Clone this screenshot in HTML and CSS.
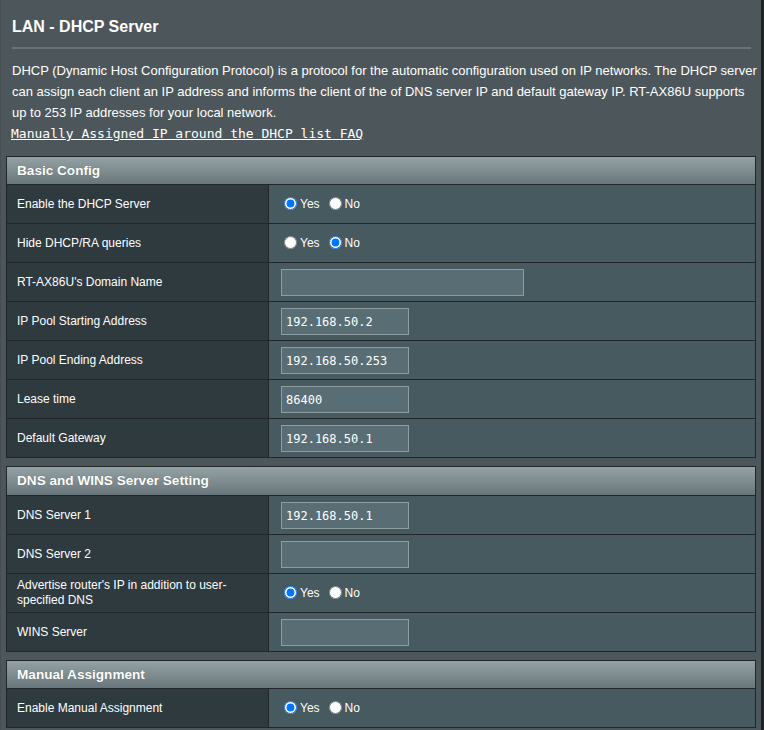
FILE: index.html
```html
<!DOCTYPE html>
<html>
<head>
<meta charset="utf-8">
<title>LAN - DHCP Server</title>
<link rel="stylesheet" href="styles.css">
</head>
<body>
<div class="page">
  <div class="head">
    <div class="title">LAN - DHCP Server</div>
    <div class="rule"></div>
    <p class="desc">DHCP (Dynamic Host Configuration Protocol) is a protocol for the automatic configuration used on IP networks. The DHCP server can assign each client an IP address and informs the client of the of DNS server IP and default gateway IP. RT-AX86U supports up to 253 IP addresses for your local network.<br><a class="faq" href="#">Manually Assigned IP around the DHCP list FAQ</a></p>
  </div>

  <div class="section">
    <div class="section-head">Basic Config</div>
    <div class="row">
      <div class="label">Enable the DHCP Server</div>
      <div class="value"><input type="radio" name="dhcp" checked><span class="opt">Yes</span> <input type="radio" name="dhcp"><span class="opt">No</span></div>
    </div>
    <div class="row">
      <div class="label">Hide DHCP/RA queries</div>
      <div class="value"><input type="radio" name="hide"><span class="opt">Yes</span> <input type="radio" name="hide" checked><span class="opt">No</span></div>
    </div>
    <div class="row">
      <div class="label">RT-AX86U's Domain Name</div>
      <div class="value"><input class="field wide" type="text" value=""></div>
    </div>
    <div class="row">
      <div class="label">IP Pool Starting Address</div>
      <div class="value"><input class="field" type="text" value="192.168.50.2"></div>
    </div>
    <div class="row">
      <div class="label">IP Pool Ending Address</div>
      <div class="value"><input class="field" type="text" value="192.168.50.253"></div>
    </div>
    <div class="row">
      <div class="label">Lease time</div>
      <div class="value"><input class="field" type="text" value="86400"></div>
    </div>
    <div class="row">
      <div class="label">Default Gateway</div>
      <div class="value"><input class="field" type="text" value="192.168.50.1"></div>
    </div>
  </div>

  <div class="section second">
    <div class="section-head">DNS and WINS Server Setting</div>
    <div class="row">
      <div class="label">DNS Server 1</div>
      <div class="value"><input class="field" type="text" value="192.168.50.1"></div>
    </div>
    <div class="row">
      <div class="label">DNS Server 2</div>
      <div class="value"><input class="field" type="text" value=""></div>
    </div>
    <div class="row">
      <div class="label two-line">Advertise router's IP in addition to user-specified DNS</div>
      <div class="value"><input type="radio" name="adv" checked><span class="opt">Yes</span> <input type="radio" name="adv"><span class="opt">No</span></div>
    </div>
    <div class="row">
      <div class="label">WINS Server</div>
      <div class="value"><input class="field" type="text" value=""></div>
    </div>
  </div>

  <div class="section third">
    <div class="section-head">Manual Assignment</div>
    <div class="row">
      <div class="label">Enable Manual Assignment</div>
      <div class="value"><input type="radio" name="man" checked><span class="opt">Yes</span> <input type="radio" name="man"><span class="opt">No</span></div>
    </div>
  </div>
</div>
</body>
</html>
```

FILE: styles.css
```css
html, body {
  margin: 0;
  padding: 0;
}

body {
  background: #1f2326;
  font-family: "Liberation Sans", Arial, sans-serif;
  color: #ffffff;
  overflow: hidden;
}

.page {
  width: 760px;
  height: 730px;
  background: #4d575b;
  border-left: 1px solid #454e51;
  overflow: hidden;
}

.head {
  padding: 17px 2px 0 11px;
}

.title {
  font-size: 16px;
  font-weight: bold;
  line-height: 20px;
  height: 20px;
}

.rule {
  margin: 10px 8px 0 0;
  height: 2px;
  background: #65737a;
}

.desc {
  margin: 11px 0 0 0;
  font-size: 13px;
  line-height: 21px;
}

.faq {
  color: #ffffff;
  text-decoration: underline;
  font-family: "DejaVu Sans Mono", "Liberation Mono", monospace;
  font-size: 13px;
  margin-left: -1px;
}

.section {
  margin: 12px 0 0 5px;
  width: 748px;
  border: 1px solid #222628;
}

.section.second {
  margin-top: 8px;
}

.section.second .section-head {
  height: 28px;
  line-height: 28px;
}

.section.third {
  margin-top: 8px;
}

.section-head {
  height: 27px;
  line-height: 27px;
  padding-left: 10px;
  font-size: 13.6px;
  font-weight: bold;
  background: linear-gradient(to bottom, #93a1a5 0%, #7d8b8f 55%, #68757a 100%);
  border-bottom: 1px solid #222628;
  text-shadow: 0 0 1px rgba(0, 0, 0, 0.35);
}

.row {
  display: flex;
  height: 38px;
  border-bottom: 1px solid #222628;
}

.row:last-child {
  border-bottom: none;
}

.label {
  width: 251px;
  padding-left: 10px;
  background: #2e3a3e;
  border-right: 1px solid #222628;
  font-size: 12px;
  line-height: 15px;
  display: flex;
  align-items: center;
}

.value {
  flex: 1;
  background: #475a5f;
  padding-left: 10px;
  display: flex;
  align-items: center;
  font-size: 12px;
}

.value input[type="radio"] {
  width: 13px;
  height: 13px;
  margin: 0 3px 0 5px;
  position: relative;
  top: -1px;
}

.opt {
  margin-right: 4px;
  line-height: 15px;
}

.field {
  box-sizing: border-box;
  width: 128px;
  height: 27px;
  margin: 1px 0 0 2px;
  padding: 0 0 0 4px;
  background: #596e74;
  border: 1px solid #8e9da0;
  color: #ffffff;
  font-family: "DejaVu Sans Mono", "Liberation Mono", monospace;
  font-size: 12px;
  outline: none;
}

.field.wide {
  width: 243px;
}
```
